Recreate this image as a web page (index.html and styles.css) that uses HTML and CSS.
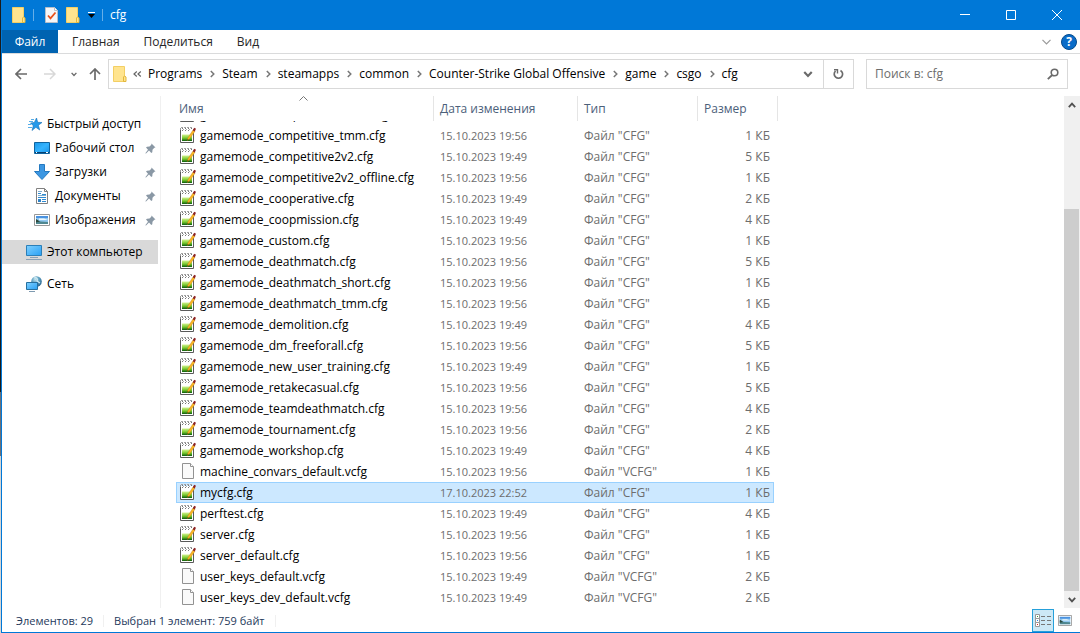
FILE: index.html
```html
<!DOCTYPE html>
<html lang="ru">
<head>
<meta charset="utf-8">
<title>cfg</title>
<link rel="stylesheet" href="styles.css">
</head>
<body>
<svg class="defs" aria-hidden="true">
  <defs>
    <linearGradient id="green" x1="0" y1="0" x2="0" y2="1"><stop offset="0" stop-color="#d2f28c"/><stop offset="0.55" stop-color="#76c82c"/><stop offset="1" stop-color="#0a5a0c"/></linearGradient>
    <linearGradient id="screen" x1="0" y1="0" x2="1" y2="1"><stop offset="0" stop-color="#1b98e8"/><stop offset="0.5" stop-color="#35b4ff"/><stop offset="1" stop-color="#1c93e6"/></linearGradient>
    <linearGradient id="glass" x1="0" y1="0" x2="1" y2="1"><stop offset="0" stop-color="#7fd0ff"/><stop offset="1" stop-color="#28a0f4"/></linearGradient>
    <radialGradient id="globe" cx="0.4" cy="0.3" r="0.7"><stop offset="0" stop-color="#c4e4f0"/><stop offset="0.5" stop-color="#5c9fc0"/><stop offset="1" stop-color="#2b6690"/></radialGradient>
    <symbol id="folder" viewBox="0 0 14 16"><path d="M.5.5h11v9.500l1.500 1v4.500H.500z" fill="#ffe48f"/><path d="M.5.5h11v9.500M.5.5v15H12" fill="none" stroke="#f3cf64"/><path d="M10.500 15.500V11l1-1 1.500 1v4.500z" fill="#ffe48f" stroke="#e2b73c"/></symbol>
    <symbol id="cfg" viewBox="0 0 16 16" preserveAspectRatio="xMidYMin meet"><path d="M.5 2v13.500h13V6" fill="#fff" stroke="#5a5a5a"/><path d="M1 2h12v13H1z" fill="#fff"/><path d="M2 7.500h10V14H2z" fill="url(#green)"/><path d="M.5 1v2M13.500 2v3" stroke="#999"/><path d="M1 .5h2M4 .5h2M7 .5h2M10 .5h2" stroke="#a4a4a4"/><path d="M2 1.500h1M5 1.500h1M8 1.500h1M11 1.500h1M2 3.500h1M5 3.500h1M8 3.500h1" stroke="#777"/><path d="M3 2.500h1M6 2.500h1M9 2.500h1" stroke="#aaa"/><path d="M7.300 13.500L7.800 11 13 3l2 1.200L9.500 12z" fill="#fbb625" stroke="#b97912" stroke-width=".4"/><path d="M7.300 13.500l.4-1.600 1 .6z" fill="#443010"/><path d="M12.800 3.300L14.200.8l1.800 1-1.300 2.600z" fill="#8d2323"/></symbol>
    <symbol id="blank" viewBox="0 0 16 16" preserveAspectRatio="xMidYMin meet"><path d="M2.500.5h8l3 3v12h-11z" fill="#fafafa" stroke="#929292"/><path d="M10.500.5v3h3" fill="#fff" stroke="#929292"/></symbol>
    <symbol id="pin" viewBox="0 0 11 11"><path d="M6.500.5l4 4-1.200.3L7.500 6.800l-.2 2.400-1 .8L4 7.500 1 10.500.3 10.200l2.700-3.500L1 4.500l1-.8 2.500-.2 1.800-1.700z" fill="#8a98a5"/></symbol>
    <symbol id="picture" viewBox="0 0 16 12" preserveAspectRatio="none"><path d="M.5.5h15v11H.5z" fill="#fff" stroke="#989898"/><path d="M2 2h12v8H2z" fill="#91c8f0"/><path d="M2 2h12v2H2z" fill="#4a92e0"/><path d="M5 4.500h5l4 1.500H5z" fill="#edf7fd"/><path d="M2 6.500l5 1 7 .5v2H2z" fill="#4f8790"/><path d="M2 5l4 2.500L2 8.500z" fill="#2b4a3c"/></symbol>
    <symbol id="chev" viewBox="0 0 8 6"><path d="M.8.8L4 4.300 7.200.8" fill="none" stroke="currentColor" stroke-width="1.800"/></symbol>
    <symbol id="next" viewBox="0 0 5 8"><path d="M.8 1L3.800 4 .8 7" fill="none" stroke="#777" stroke-width="1.500"/></symbol>
  </defs>
</svg>
<div class="desktop">
<main class="window">
  <header class="titlebar">
    <svg class="folder"><use href="#folder"/></svg>
    <span class="tick"></span>
    <div class="quick">
      <button aria-label="Свойства"><svg width="13" height="16"><path d="M.5.5h9l3 3v12H.5z" fill="#f5f6f8" stroke="#b8bfc8"/><path d="M9.500.5v3h3" fill="#fff" stroke="#b8bfc8"/><path d="M3 8.500l2.500 2.800L10.500 5.500" fill="none" stroke="#e8521c" stroke-width="1.800"/></svg></button>
      <button aria-label="Новая папка"><svg class="folder"><use href="#folder"/></svg></button>
      <button aria-label="Настройка панели"><svg width="7" height="6"><path d="M0 .5h7" stroke="#fff"/><path d="M0 2h7L3.500 6z" fill="#000"/></svg></button>
    </div>
    <span class="tick"></span>
    <h1 class="caption">cfg</h1>
    <div class="sysbuttons">
      <button aria-label="Свернуть"><svg width="10" height="10"><path d="M0 4.500h10"/></svg></button>
      <button aria-label="Развернуть"><svg width="10" height="10"><path d="M.5.5h9v9h-9z"/></svg></button>
      <button aria-label="Закрыть"><svg width="10" height="10"><path d="M0 0l10 10M10 0L0 10"/></svg></button>
    </div>
  </header>
  <nav class="ribbon">
    <button class="tab file">Файл</button>
    <button class="tab">Главная</button>
    <button class="tab">Поделиться</button>
    <button class="tab">Вид</button>
    <div class="ribbon-end">
      <button aria-label="Развернуть ленту"><svg width="9" height="6"><path d="M.5.8l4 4 4-4" fill="none" stroke="#999" stroke-width="1.200"/></svg></button>
      <button class="help" aria-label="Справка">?</button>
    </div>
  </nav>
  <div class="toolbar">
    <div class="history">
      <button aria-label="Назад"><svg width="12" height="12"><path d="M12 6H1M6 1L1 6l5 5" fill="none" stroke="#6a6a6a" stroke-width="1.700"/></svg></button>
      <button aria-label="Вперёд"><svg width="12" height="12"><path d="M0 6h11M6 1l5 5-5 5" fill="none" stroke="#d8d8d8" stroke-width="1.500"/></svg></button>
      <button class="recent" aria-label="Недавние"><svg width="6" height="5"><use href="#chev"/></svg></button>
      <button aria-label="Вверх"><svg width="12" height="12"><path d="M6 12V1M1 6l5-5 5 5" fill="none" stroke="#6a6a6a" stroke-width="1.700"/></svg></button>
    </div>
    <div class="address">
      <svg class="folder"><use href="#folder"/></svg>
      <button class="more" aria-label="Ещё"><svg width="9" height="6"><path d="M3.800.5L1 3l2.800 2.500M7.800.5L5 3l2.800 2.500" fill="none" stroke="#666" stroke-width="1.200"/></svg></button>
      <nav class="crumbs">
        <a href="#">Programs</a><svg class="next"><use href="#next"/></svg>
        <a href="#">Steam</a><svg class="next"><use href="#next"/></svg>
        <a href="#">steamapps</a><svg class="next"><use href="#next"/></svg>
        <a href="#">common</a><svg class="next"><use href="#next"/></svg>
        <a href="#">Counter-Strike Global Offensive</a><svg class="next"><use href="#next"/></svg>
        <a href="#">game</a><svg class="next"><use href="#next"/></svg>
        <a href="#">csgo</a><svg class="next"><use href="#next"/></svg>
        <a href="#">cfg</a>
      </nav>
      <button class="drop" aria-label="Предыдущие расположения"><svg width="10" height="7"><use href="#chev"/></svg></button>
      <button class="refresh" aria-label="Обновить"><svg width="11" height="12"><path d="M7.500 2.400a4.200 4.200 0 1 1-5 .6" fill="none" stroke="#6a6a6a" stroke-width="1.700"/><path d="M1 1.800h3.500v3.700" fill="none" stroke="#6a6a6a" stroke-width="1.400"/></svg></button>
    </div>
    <label class="search">
      <input type="text" placeholder="Поиск в: cfg" aria-label="Поиск">
      <svg width="12" height="12"><circle cx="7.500" cy="4.500" r="3.300" fill="none" stroke="#6a6a6a" stroke-width="1.600"/><path d="M5.200 7L.8 11.200" stroke="#6a6a6a" stroke-width="1.800"/></svg>
    </label>
  </div>
  <div class="body">
    <nav class="sidebar">
      <a class="item" href="#"><svg width="14" height="13"><path d="M8.500 0l1.200 4.300 4.300.2-3.600 2.700 1.300 4.800-3.800-2.700L4 12.500l1.300-4.700L2.500 5l3.800-.5z" fill="#2499ea" stroke="#1470b8" stroke-width=".6"/><path d="M3 1.500h3M1 3.500h4M0 6.500h3M0 9.500h4" stroke="#57aee8"/></svg>Быстрый доступ</a>
      <a class="item sub" href="#"><svg width="16" height="12"><path d="M.5.5h15v11H.5z" fill="url(#screen)" stroke="#10649f"/><path d="M1 10.500h14" stroke="#07406f"/><path d="M2 10.500h1M12 10.500h2" stroke="#fff"/></svg>Рабочий стол<svg class="pin"><use href="#pin"/></svg></a>
      <a class="item sub" href="#"><svg width="16" height="16"><path d="M5.500.5h5v7h5L8 15.500.5 7.500h5z" fill="#3c97e2" stroke="#2479c0"/></svg>Загрузки<svg class="pin"><use href="#pin"/></svg></a>
      <a class="item sub" href="#"><svg width="16" height="16"><path d="M2.500.5h8l3 3v12h-11z" fill="#fff" stroke="#808080"/><path d="M10.500.5v3h3" fill="none" stroke="#808080"/><path d="M4 5.500h3M8 6.500h4M4 9.500h8M8 11.500h4M8 13.500h4" stroke="#2e8ad2"/><path d="M4 7.500h8M4 3.500h4" stroke="#7faed0"/><path d="M4 11h3v3H4z" fill="#2d83c9"/></svg>Документы<svg class="pin"><use href="#pin"/></svg></a>
      <a class="item sub" href="#"><svg width="16" height="12"><use href="#picture"/></svg>Изображения<svg class="pin"><use href="#pin"/></svg></a>
      <a class="item top current" href="#"><svg width="16" height="15"><path d="M.5.5h15v10H.5z" fill="url(#glass)" stroke="#2b7fb8"/><path d="M4 12.500h8M0 14.500h16" stroke="#8aa1b5"/></svg>Этот компьютер</a>
      <a class="item top" href="#"><svg width="16" height="16"><circle cx="10.500" cy="5.500" r="5.300" fill="url(#globe)"/><path d="M8 2c3-1 4 1 3 3l3 2" fill="none" stroke="#d0ebf3" stroke-width="1.200"/><path d="M.5 6.500h11v7H.5z" fill="url(#glass)" stroke="#26709f"/><path d="M3 15.500h6" stroke="#7e9ab0"/></svg>Сеть</a>
    </nav>
    <section class="content">
      <table class="files">
        <thead><tr><th class="sorted">Имя<svg width="9" height="5"><path d="M.5 4.500l4-4 4 4" fill="none" stroke="#777"/></svg></th><th>Дата изменения</th><th>Тип</th><th>Размер</th></tr></thead>
        <tbody>
          <tr><td><svg><use href="#cfg"/></svg>gamemode_competitive_short.cfg</td><td>15.10.2023 19:56</td><td>Файл "CFG"</td><td>1 КБ</td></tr>
          <tr><td><svg><use href="#cfg"/></svg>gamemode_competitive_tmm.cfg</td><td>15.10.2023 19:56</td><td>Файл "CFG"</td><td>1 КБ</td></tr>
          <tr><td><svg><use href="#cfg"/></svg>gamemode_competitive2v2.cfg</td><td>15.10.2023 19:49</td><td>Файл "CFG"</td><td>5 КБ</td></tr>
          <tr><td><svg><use href="#cfg"/></svg>gamemode_competitive2v2_offline.cfg</td><td>15.10.2023 19:56</td><td>Файл "CFG"</td><td>1 КБ</td></tr>
          <tr><td><svg><use href="#cfg"/></svg>gamemode_cooperative.cfg</td><td>15.10.2023 19:49</td><td>Файл "CFG"</td><td>2 КБ</td></tr>
          <tr><td><svg><use href="#cfg"/></svg>gamemode_coopmission.cfg</td><td>15.10.2023 19:49</td><td>Файл "CFG"</td><td>4 КБ</td></tr>
          <tr><td><svg><use href="#cfg"/></svg>gamemode_custom.cfg</td><td>15.10.2023 19:56</td><td>Файл "CFG"</td><td>1 КБ</td></tr>
          <tr><td><svg><use href="#cfg"/></svg>gamemode_deathmatch.cfg</td><td>15.10.2023 19:56</td><td>Файл "CFG"</td><td>5 КБ</td></tr>
          <tr><td><svg><use href="#cfg"/></svg>gamemode_deathmatch_short.cfg</td><td>15.10.2023 19:56</td><td>Файл "CFG"</td><td>1 КБ</td></tr>
          <tr><td><svg><use href="#cfg"/></svg>gamemode_deathmatch_tmm.cfg</td><td>15.10.2023 19:56</td><td>Файл "CFG"</td><td>1 КБ</td></tr>
          <tr><td><svg><use href="#cfg"/></svg>gamemode_demolition.cfg</td><td>15.10.2023 19:49</td><td>Файл "CFG"</td><td>4 КБ</td></tr>
          <tr><td><svg><use href="#cfg"/></svg>gamemode_dm_freeforall.cfg</td><td>15.10.2023 19:56</td><td>Файл "CFG"</td><td>5 КБ</td></tr>
          <tr><td><svg><use href="#cfg"/></svg>gamemode_new_user_training.cfg</td><td>15.10.2023 19:49</td><td>Файл "CFG"</td><td>1 КБ</td></tr>
          <tr><td><svg><use href="#cfg"/></svg>gamemode_retakecasual.cfg</td><td>15.10.2023 19:56</td><td>Файл "CFG"</td><td>5 КБ</td></tr>
          <tr><td><svg><use href="#cfg"/></svg>gamemode_teamdeathmatch.cfg</td><td>15.10.2023 19:56</td><td>Файл "CFG"</td><td>4 КБ</td></tr>
          <tr><td><svg><use href="#cfg"/></svg>gamemode_tournament.cfg</td><td>15.10.2023 19:56</td><td>Файл "CFG"</td><td>2 КБ</td></tr>
          <tr><td><svg><use href="#cfg"/></svg>gamemode_workshop.cfg</td><td>15.10.2023 19:49</td><td>Файл "CFG"</td><td>4 КБ</td></tr>
          <tr><td><svg><use href="#blank"/></svg>machine_convars_default.vcfg</td><td>15.10.2023 19:56</td><td>Файл "VCFG"</td><td>1 КБ</td></tr>
          <tr class="selected"><td><svg><use href="#cfg"/></svg>mycfg.cfg</td><td>17.10.2023 22:52</td><td>Файл "CFG"</td><td>1 КБ</td></tr>
          <tr><td><svg><use href="#cfg"/></svg>perftest.cfg</td><td>15.10.2023 19:49</td><td>Файл "CFG"</td><td>4 КБ</td></tr>
          <tr><td><svg><use href="#cfg"/></svg>server.cfg</td><td>15.10.2023 19:56</td><td>Файл "CFG"</td><td>1 КБ</td></tr>
          <tr><td><svg><use href="#cfg"/></svg>server_default.cfg</td><td>15.10.2023 19:56</td><td>Файл "CFG"</td><td>1 КБ</td></tr>
          <tr><td><svg><use href="#blank"/></svg>user_keys_default.vcfg</td><td>15.10.2023 19:49</td><td>Файл "VCFG"</td><td>2 КБ</td></tr>
          <tr><td><svg><use href="#blank"/></svg>user_keys_dev_default.vcfg</td><td>15.10.2023 19:49</td><td>Файл "VCFG"</td><td>2 КБ</td></tr>
        </tbody>
      </table>
      <div class="scrollbar">
        <button class="up" aria-label="Вверх"><svg width="8" height="6"><use href="#chev"/></svg></button>
        <div class="track"><div class="thumb"></div></div>
        <button aria-label="Вниз"><svg width="8" height="6"><use href="#chev"/></svg></button>
      </div>
    </section>
  </div>
  <footer class="status">
    <span>Элементов: 29</span>
    <span>Выбран 1 элемент: 759 байт</span>
    <div class="views">
      <button class="view active" aria-label="Таблица"><svg width="16" height="13"><path d="M.5.5h4v4h-4zM.5 4.500h4v4h-4zM.5 8.500h4v4h-4z" fill="#fff" stroke="#999"/><path d="M6 2.500h4M12 2.500h4M6 6.500h4M12 6.500h4M6 10.500h4M12 10.500h4" stroke="#777"/><path d="M2 2.500h1" stroke="#3a9a3a"/><path d="M2 6.500h1" stroke="#2f7fe0"/><path d="M2 10.500h1" stroke="#d22"/></svg></button>
      <button class="view" aria-label="Крупные значки"><svg width="14" height="11"><use href="#picture"/></svg></button>
    </div>
  </footer>
</main>
</div>
</body>
</html>
```
FILE: styles.css
```css
* { box-sizing: border-box; }
body { margin: 0; font: 12px/16px "Open Sans", "Noto Sans", sans-serif; color: #000; }
button { border: 0; padding: 0; background: none; font: inherit; color: inherit; display: flex; align-items: center; justify-content: center; }
a { color: inherit; text-decoration: none; }
svg { display: block; flex: none; }
.defs { position: absolute; width: 0; height: 0; }
.desktop { height: 100vh; padding-left: 1px; background: linear-gradient(#1b1b1b 0 62%, #6c7078 62% 72%, #d5d5d5 72%); }
.window { height: 100%; display: flex; flex-direction: column; background: #fff; border-left: 1px solid #0078d7; border-bottom: 1px solid #0078d7; }
.folder { width: 14px; height: 16px; }

.titlebar { flex: none; height: 30px; display: flex; align-items: center; background: #0078d7; color: #fff; padding-left: 10px; gap: 7px; }
.tick { width: 1px; height: 12px; background: #66aee8; }
.quick { display: flex; align-items: center; gap: 8px; padding-left: 4px; }
.caption { margin: 0; font-size: 12px; font-weight: 400; }
.sysbuttons { display: flex; margin-left: auto; height: 100%; }
.sysbuttons button { width: 46px; }
.sysbuttons path { fill: none; stroke: #fff; }

.ribbon { flex: none; height: 24px; display: flex; border-bottom: 1px solid #dadbdc; color: #262626; }
.tab { padding: 0 10px 0 14px; }
.tab.file { width: 56px; padding: 0; background: #0063b1; color: #fff; }
.ribbon-end { display: flex; align-items: center; gap: 10px; margin-left: auto; padding-right: 3px; }
.help { width: 16px; height: 16px; border: 1px solid #044a8c; border-radius: 50%; background: #0a6cc8; color: #fff; font-weight: 700; }

.toolbar { flex: none; display: flex; padding: 5px 12px 0 0; height: 42px; }
.history { display: flex; align-items: center; height: 30px; padding-left: 13px; width: 106px; gap: 17px; color: #6a6a6a; }
.recent { margin: 0 -5px 0 -2px; }
.address { flex: 1; height: 30px; display: flex; align-items: center; border: 1px solid #d9d9d9; padding-left: 4px; color: #6a6a6a; }
.more { width: 21px; }
.crumbs { flex: 1; display: flex; align-items: center; color: #000; }
.next { width: 5px; height: 8px; margin: 0 7px 0 8px; }
.drop { width: 30px; height: 100%; }
.refresh { width: 30px; height: 100%; border-left: 1px solid #d9d9d9; }
.search { width: 202px; height: 30px; margin-left: 12px; border: 1px solid #d9d9d9; display: flex; align-items: center; padding: 0 8px; }
.search input { flex: 1; min-width: 0; border: 0; padding: 0; outline: 0; font: inherit; background: none; }
.search input::placeholder { color: #6d6d6d; opacity: 1; }

.body { flex: 1; min-height: 0; display: flex; }
.sidebar { width: 159px; padding-top: 16px; border-right: 1px solid #f0f0f0; }
.item { display: flex; align-items: center; height: 24px; margin-right: 2px; padding-left: 26px; gap: 5px; white-space: nowrap; }
.item.sub { padding-left: 32px; }
.item.top { margin-top: 8px; padding-left: 24px; }
.item.current { background: #d9d9d9; }
.pin { width: 11px; height: 11px; margin: 0 2px 0 auto; }

.content { flex: 1; min-width: 0; display: flex; }
.files { flex: 1; min-width: 0; display: flex; flex-direction: column; padding-left: 15px; }
.files thead { display: block; height: 25px; color: #4c607a; }
.files thead tr { display: grid; grid-template-columns: 258px 144px 120px 80px; height: 25px; }
.files th { position: relative; font-weight: 400; text-align: left; padding: 5px 6px 0; border-right: 1px solid #e5e5e5; }
.files th.sorted { padding-left: 3px; }
.files th.sorted svg { position: absolute; top: 0; left: 123px; }
.files tbody { flex: 1; min-height: 0; overflow: hidden; display: flex; flex-direction: column; justify-content: flex-end; color: #6d6d6d; }
.files tbody tr { flex: none; display: grid; grid-template-columns: 258px 144px 120px 76px; width: 598px; height: 21px; align-items: center; }
.files td { padding: 0 4px 0 6px; line-height: 17px; white-space: nowrap; }
.files td:first-child { display: flex; align-items: center; gap: 4px; padding-left: 4px; color: #000; }
.files td:nth-child(2) { font-size: 11px; }
.files td:last-child { text-align: right; }
.files td svg { width: 16px; height: 17px; }
.files tr.selected { background: #cce8ff; outline: 1px solid #99d1ff; outline-offset: -1px; }

.scrollbar { width: 16px; display: flex; flex-direction: column; background: #f0f0f0; color: #505050; }
.scrollbar button { height: 17px; }
.scrollbar .up svg { transform: rotate(180deg); }
.track { flex: 1; display: flex; flex-direction: column; justify-content: flex-end; }
.thumb { height: 80%; margin-right: 1px; background: #cdcdcd; }

.status { flex: none; height: 24px; display: flex; align-items: center; padding: 1px 4px 0 14px; font-size: 11px; color: #1e395b; }
.status span { padding-right: 10px; margin-right: 10px; border-right: 1px solid #f0f0f0; line-height: 12px; }
.views { display: flex; margin-left: auto; height: 100%; }
.view { width: 22px; }
.view.active { background: #cce8f6; border: 1px solid #26a0da; }
```
